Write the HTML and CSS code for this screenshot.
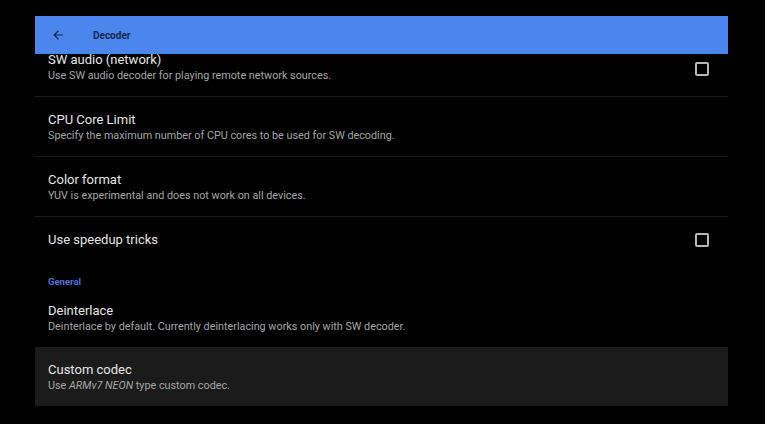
FILE: index.html
```html
<!DOCTYPE html>
<html>
<head>
<meta charset="utf-8">
<link rel="stylesheet" href="styles.css">
</head>
<body>
<div class="screen">
  <div class="panel">
    <div class="appbar">
      <svg class="back" width="14" height="14" viewBox="0 0 24 24"><path d="M20 11H7.83l5.59-5.59L12 4l-8 8 8 8 1.41-1.41L7.83 13H20v-2z" fill="#14234a"/></svg>
      <span class="appbar-title">Decoder</span>
    </div>
    <div class="list">
      <div class="row divided">
        <div class="texts">
          <div class="title">SW audio (network)</div>
          <div class="summary">Use SW audio decoder for playing remote network sources.</div>
        </div>
        <span class="check first"></span>
      </div>
      <div class="row divided">
        <div class="texts">
          <div class="title">CPU Core Limit</div>
          <div class="summary">Specify the maximum number of CPU cores to be used for SW decoding.</div>
        </div>
      </div>
      <div class="row divided">
        <div class="texts">
          <div class="title">Color format</div>
          <div class="summary">YUV is experimental and does not work on all devices.</div>
        </div>
      </div>
      <div class="row single">
        <div class="texts">
          <div class="title">Use speedup tricks</div>
        </div>
        <span class="check"></span>
      </div>
      <div class="category">General</div>
      <div class="row">
        <div class="texts">
          <div class="title">Deinterlace</div>
          <div class="summary">Deinterlace by default. Currently deinterlacing works only with SW decoder.</div>
        </div>
      </div>
      <div class="row focused">
        <div class="texts">
          <div class="title">Custom codec</div>
          <div class="summary">Use <i>ARMv7 NEON</i> type custom codec.</div>
        </div>
      </div>
    </div>
  </div>
</div>
</body>
</html>
```

FILE: styles.css
```css
html, body {
  margin: 0;
  padding: 0;
  background: #000;
  width: 765px;
  height: 424px;
  overflow: hidden;
  font-family: Roboto, "Liberation Sans", sans-serif;
}
.screen {
  padding: 16px 37px 0 35px;
}
.panel {
  position: relative;
  width: 693px;
}
.appbar {
  position: absolute;
  top: 0;
  left: 0;
  right: 0;
  height: 38px;
  background: #4a86ec;
  display: flex;
  align-items: center;
  z-index: 2;
}
.back {
  margin-left: 16px;
  margin-right: 28px;
}
.appbar-title {
  font-size: 10px;
  font-weight: 700;
  color: #17264d;
}
.list {
  padding-top: 21px;
}
.row {
  display: flex;
  align-items: center;
  height: 59px;
  padding: 0 19px 0 13px;
  box-sizing: border-box;
}
.row.divided {
  height: 60px;
  border-bottom: 1px solid #1a1a1a;
}
.row.single {
  height: 45px;
}
.texts {
  flex: 1;
  margin-top: 1px;
}
.single .texts {
  margin-top: 0;
}
.title {
  font-size: 13px;
  line-height: 16px;
  color: #e6e6e6;
}
.summary {
  font-size: 10.8px;
  line-height: 14px;
  color: #a6a6a6;
  margin-top: 1px;
}
.check {
  width: 10px;
  height: 10px;
  border: 2px solid #b8b8b8;
  border-radius: 2px;
}
.check.first {
  margin-top: 4px;
}
.category {
  height: 26px;
  padding: 14px 0 0 13px;
  box-sizing: border-box;
  font-size: 9.5px;
  font-weight: 700;
  color: #4f72d6;
}
.focused {
  background: #1b1b1b;
}
```
